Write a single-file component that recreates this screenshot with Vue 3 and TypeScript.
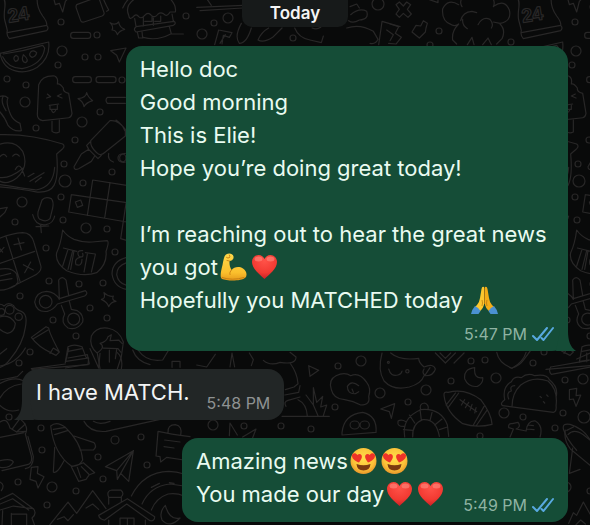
<script setup lang="ts">
type EmojiName = 'muscle' | 'heart' | 'pray' | 'love'
type Part = string | { emoji: EmojiName; label: string }

interface Message {
  id: number
  side: 'out' | 'in'
  time: string
  tail: boolean
  stacked: boolean
  lines: Part[][]
}

const heart: Part = { emoji: 'heart', label: 'red heart' }
const love: Part = { emoji: 'love', label: 'heart eyes' }

const messages: Message[] = [
  {
    id: 1,
    side: 'out',
    time: '5:47 PM',
    tail: true,
    stacked: true,
    lines: [
      ['Hello doc'],
      ['Good morning'],
      ['This is Elie!'],
      ['Hope you’re doing great today!'],
      [],
      ['I’m reaching out to hear the great news you got', { emoji: 'muscle', label: 'flexed biceps' }, heart],
      ['Hopefully you MATCHED today ', { emoji: 'pray', label: 'folded hands' }],
    ],
  },
  { id: 2, side: 'in', time: '5:48 PM', tail: true, stacked: false, lines: [['I have MATCH.']] },
  {
    id: 3,
    side: 'out',
    time: '5:49 PM',
    tail: false,
    stacked: false,
    lines: [
      ['Amazing news', love, love],
      ['You made our day', heart, heart],
    ],
  },
]

// Small rings scattered between the doodles: x, y, radius
const rings: number[][] = [
  [61, 22, 3], [97, 35, 3], [62, 51, 5], [85, 57, 3], [98, 57, 3], [58, 65, 3], [7, 79, 3], [26, 85, 3],
  [122, 80, 3], [25, 102, 5], [100, 112, 3], [82, 122, 5], [36, 128, 3], [75, 140, 3], [64, 164, 3],
  [122, 158, 4], [65, 181, 6], [83, 183, 3], [112, 172, 3], [22, 202, 5], [61, 197, 3], [63, 220, 3],
  [15, 222, 3], [86, 228, 5], [107, 229, 3], [46, 248, 3], [115, 252, 3], [49, 281, 3], [79, 284, 3],
  [103, 283, 3], [20, 296, 3], [90, 308, 3], [107, 318, 3], [53, 320, 3], [76, 336, 3], [30, 352, 3],
  [19, 363, 3], [186, 16, 3], [214, 23, 3], [228, 18, 5], [202, 34, 5], [293, 38, 3], [378, 4, 6],
  [439, 31, 3], [511, 42, 3], [430, 45, 3], [9, 417, 3], [41, 428, 3], [42, 450, 3], [115, 440, 4],
  [141, 437, 3], [98, 457, 3], [147, 465, 3], [103, 479, 3], [52, 487, 5], [76, 491, 3], [18, 482, 3],
  [47, 505, 3], [213, 425, 5], [244, 426, 3], [281, 426, 3], [311, 429, 3], [338, 366, 3], [361, 361, 5],
  [335, 407, 3], [380, 393, 5], [408, 402, 3], [426, 390, 5], [451, 381, 3], [471, 361, 3], [485, 360, 3],
  [496, 378, 5], [504, 413, 5], [565, 380, 3], [583, 379, 5], [563, 413, 3], [584, 417, 6], [480, 436, 3],
]
</script>

<template>
  <main class="chat">
    <svg class="wallpaper" aria-hidden="true">
      <defs>
        <g id="rings-layer">
          <circle v-for="(r, i) in rings" :key="i" :cx="r[0]" :cy="r[1]" :r="r[2]" />
        </g>
        <g id="upper-doodles">
          <g transform="scale(.3334)" stroke-width="3.6">
            <!-- calendar -->
            <path d="M8-10C24 10 8 30 14 60Q20 82 22 92Q18 104 28 116L140 92Q148 84 140 76Q142 66 128 48Q108 20 112-10M22 98L140 76" />
            <text x="26" y="68" font-size="58" font-family="Liberation Sans" font-weight="bold" transform="rotate(-9 26 68)">24</text>
            <path d="M160-8L166 14 178 10 188 36 196 4 208-8M230 14Q226 20 230 28L242 62Q244 68 252 66L306 48Q314 44 312 38L296-8M230 14L290-8M308-8Q316 12 326 30L320 34" />
            <!-- burger cake -->
            <path d="M412-8Q372 14 386 46Q388 60 398 52Q408 38 416 50Q424 58 434 46Q444 34 454 46Q464 56 474 42Q484 34 494 44Q502 50 510 36L526 36Q530 14 506-8M404 56L408 80M430 52V78M434 64H456V50M460 54V76M464 64H482V48M516 42L520 64M408 80Q398 88 408 96L520 76Q530 70 522 64L408 80M412 96L416 114H428L426 96M508 80L514 102H550M430 112Q470 124 512 102M368 24Q380-4 396-8" />
            <!-- stars -->
            <path d="M330 68Q346 78 356 66Q358 82 374 88Q358 92 352 104Q348 90 336 90Q342 80 330 68Z" />
            <path d="M260 278Q258 294 234 296Q250 304 252 320Q258 308 278 302Q264 292 260 278Z" />
            <path d="M332 152L378 144 358 186 350 166Z" />
            <rect x="212" y="97" width="60" height="18" rx="8" />
            <rect x="218" y="230" width="56" height="18" rx="8" /><rect x="288" y="230" width="60" height="18" rx="8" />
            <path d="M376 292H322Q314 300 322 310H376" />
            <!-- watermelon -->
            <path d="M0 160L146 126Q152 172 112 202Q68 228 26 204Q6 190 0 160M8 170Q24 204 66 206Q128 194 134 144L128 136Q70 154 10 162" />
            <path d="M48 166Q36 174 46 184Q58 182 54 170ZM70 164Q62 184 76 188Q90 182 70 164ZM92 156Q84 166 96 172Q108 170 110 158Q100 148 92 156Z" />
            <!-- ice cream -->
            <path d="M116 254Q126 226 164 228Q176 234 172 252Q180 250 190 264Q188 276 206 280L216 340Q214 354 200 354L128 362Q112 358 112 344ZM156 364V394Q166 402 178 396V360M142 282L152 290 140 294M184 282L172 288 186 294M148 316L176 312M150 318V328H172V316M154 328Q160 348 168 328" />
            <!-- banana -->
            <path d="M-4 290Q14 284 24 294Q16 306 32 344Q40 362 60 370L64 392Q40 396 24 376Q12 346-6 330M10 288Q0 304 18 332" />
            <!-- smiling pillow -->
            <path d="M-6 404Q90 400 188 432Q196 438 188 446L170 462Q176 530 162 556Q150 578 112 576Q60 566-6 560M-6 434Q44 416 68 454Q88 500 50 534Q18 558-6 540M0 470Q12 456 20 470M38 468Q48 456 58 468M46 508Q56 490 64 504L74 528" />
            <!-- marker pen -->
            <path d="M330 362L272 422Q270 440 290 458Q300 470 316 456L376 408V388Q354 358 330 362ZM270 426L260 436 266 448 294 476 304 466M266 448L244 462 222 500Q222 512 236 506L274 484 284 468M326 460Q322 480 340 486M348 360Q370 376 374 392" />
            <path d="M376 460Q354 462 360 480Q368 490 376 486" />
          </g>
          <g transform="translate(0 170) scale(.3334)" stroke-width="3.6">
            <path d="M0 44Q90 58 108 60Q160 52 164-8M-4 22Q28 28 70-6M84 20L102 10M90 34L132 8M106 36L124 22" />
            <path d="M126 90Q136 78 154 86Q162 96 158 114L150 146Q138 158 120 148Q112 144 114 126ZM98 134Q106 168 138 164Q160 160 164 138M122 166L124 188M108 170L146 168" />
            <path d="M0 116L22 112 14 128-4 144" />
            <!-- crossword grid -->
            <path d="M278 30L380 46M278 30L262 136M214 74L380 98M214 74L206 126L380 156M330 38L314 144M226 96L242 90 248 106 232 112ZM378 100L362 206 382 212" />
            <!-- cat -->
            <path d="M188 180Q200 198 222 208Q250 218 276 216L322 212Q328 216 318 244Q322 282 290 308Q250 322 200 302Q164 278 170 248Q182 224 188 180ZM190 234L230 244M204 238L188 288M222 242L212 298M218 242L204 298M248 242Q228 240 236 258Q252 266 248 250M240 262Q222 266 228 284Q246 290 246 268M256 248L286 252M262 252L252 306M286 254L274 306" />
            <!-- calculator -->
            <path d="M-4 206Q34 190 68 188Q94 188 102 218L122 286Q128 304 100 318L24 356Q8 362-6 360M18 200Q34 250 60 334M-6 282L104 244M42 224L72 218M54 204L64 240M70 284L100 300M92 276L74 308M-4 232L8 246M-4 250L12 232M-4 298Q36 290 50 312L54 336Q48 350 24 356M0 318L32 310M0 332L36 326" />
            <!-- scissors -->
            <path d="M176 330Q186 316 198 330L206 376M176 330L178 388M178 388Q166 366 140 364Q108 366 104 396Q110 428 142 424Q160 420 172 402L254 378Q266 370 256 362L178 386M184 406L194 432Q180 458 204 474Q232 482 248 456Q252 434 232 422L214 418 208 394" />
            <circle cx="137" cy="395" r="19" /><circle cx="221" cy="447" r="18" />
            <path d="M312 368Q326 382 340 378Q334 390 348 394Q332 396 326 410Q322 396 304 388Q318 386 312 368Z" />
            <path d="M380 262Q336 274 336 312Q342 352 380 358M380 278Q350 288 350 314Q354 340 380 346" />
            <!-- paw -->
            <path d="M-4 404Q4 400 12 408Q24 394 40 406Q46 420 64 424Q84 432 76 472Q70 520 30 568Q16 588-6 594M-4 442Q28 430 46 460Q44 486 22 490Q6 486-4 474" />
            <circle cx="29" cy="419" r="13" /><circle cx="56" cy="440" r="11" /><circle cx="4" cy="426" r="10" />
            <path d="M94 502L138 470 146 474Q148 490 178 546L168 556 156 550Q114 530 94 502ZM100 506L144 480M150 550L160 534 176 544" />
            <path d="M196 576L204 530Q222 520 246 530L258 562 266 564 264 584 96 598M204 544L246 536M198 574L262 564" />
            <path d="M292 550Q266 528 274 498Q288 470 322 474Q358 480 370 516L364 560 352 596M292 550L300 596M292 548Q318 532 300 520Q320 516 324 500L334 494 330 512 356 510 366 520M310 534L354 536 362 546M328 540V576M350 538L346 566" />
            <path d="M398 540Q410 574 450 584" />
          </g>
        </g>
      </defs>

      <g class="ink">
        <use href="#rings-layer" />
        <use href="#upper-doodles" />
        <use href="#rings-layer" x="514" />
        <use href="#upper-doodles" x="514" />

        <!-- behind the date -->
        <g transform="translate(200 0) scale(.3334)" stroke-width="3.6">
          <path d="M-10 22L130 16M0 32L128 24M20-4L34 16M56 90L96 98 88 112 70 106 66 132M56 90L44 134M76 104L60 130M124 70Q102 110 118 130Q140 130 154 84M174 120Q184 96 206 84M174 120Q190 130 218 112L246 84M284 84Q296 114 330 120L364 128 370 108M336 84Q350 90 362 82M440 84Q480 70 520 94L534 118Q526 134 510 130M450 20L470 12 478 24M452 44Q478 22 500 34Q508 58 478 60Q458 72 446 62M536 134L546 64 600 80M560 90L580 104 570 122" />
        </g>
        <!-- top right: cross, bottle, cloud -->
        <g transform="translate(390 0) scale(.3334)" stroke-width="3.6">
          <path d="M18 14L28 6 40 18 50 6 62 14 52 28 64 42 54 52 40 40 28 52 18 42 28 28ZM100 62L112 70 108 84 106 96 88 114 66 96 78 76 92 78ZM0 72L26 80 16 100 34 112 18 132-4 130M104-6L144 8V-6" />
          <path d="M206 14Q174-6 158 26Q154 64 184 74Q196 80 206 72Q184 94 188 120L200 132M212 62Q218 36 246 34L260 38M264 74Q278 48 300 58Q312 72 304 84M312 18Q344-4 358 30Q366 64 330 70L310 66M330 72Q348 90 336 116L320 132M232 134L246 112 252 134M278 134L294 114 304 134M218 58Q216 76 232 86M216-6Q208 8 216 20M308-6Q316 8 310 20" />
        </g>

        <!-- middle band, right of the reply -->
        <g transform="translate(200 345) scale(.3334)" stroke-width="3.6">
          <path d="M-10 60L20 66 46 28M90 66L96 24 104 66M148 24L160 44 154 62M190 46Q210 64 240 52Q288 60 288 36L270 22M270 54Q292 84 294 116L282 126 256 134M254 150L296 142 300 122M258 184Q250 170 264 166L300 156M294 164Q320 176 322 214M246 214H388M318 150L340 180V128L350 172 368 154 362 186 380 180 370 212M340 180L354 212M326 62L356 76 330 94Z" />
          <path d="M408 92Q434 80 452 92Q478 80 500 112Q514 130 506 154Q512 180 482 180Q460 168 434 164Q400 162 394 134Q384 104 408 92ZM476 122Q454 104 442 124Q442 148 466 146L476 140M456 132L460 142" />
          <path d="M546 24Q532 76 552 108Q580 138 628 126Q664 116 672 92Q700 94 706 72Q700 54 672 66Q656 54 656 40Q600 48 572 24M566 72Q572 96 594 90Q604 88 606 78M672 72Q664 84 676 92M690 68L674 92" />
          <circle cx="565" cy="52" r="3" /><circle cx="622" cy="79" r="5" />
          <path d="M706 24L736 54 766 24M720 24L736 40 752 24M762 54L792 24M824 68Q790 72 794 102Q806 128 832 124Q850 116 848 98Q820 102 824 68ZM890 22Q896 54 936 70Q970 50 978 22" />
          <path d="M732 152Q730 138 744 142Q796 128 842 164Q874 206 876 238Q830 250 788 236Q738 202 732 152ZM738 180L766 144M744 188L776 144M820 240L852 184M830 240L862 194M780 164L830 200M784 180L794 164M796 188L806 172M810 196L816 178M824 204L828 188" />
          <path d="M914 164Q898 176 908 182L1060 202Q1070 200 1068 182Q1074 134 1044 108Q998 92 962 120Q936 144 936 184M914 164Q906 126 934 110Q942 92 964 98Q982 82 1004 92Q1040 86 1048 104Q1076 126 1068 156M926 162Q918 142 934 138Q928 122 944 122M1020 154L1024 158M1040 150L1044 154M1030 170L1034 174" />
          <path d="M1052 66L1166 46M1052 66Q1044 78 1054 88L1170 66M1108 134L1130 130 1128 152 1142 150 1128 184 1120 162 1108 164ZM1160 24V50M1130 42L1170 24" />
          <path d="M426 262Q432 208 488 202Q532 212 528 262L426 270ZM450 240A14 12 0 1 0 478 240A14 12 0 1 0 450 240M480 240A14 12 0 1 0 508 240A14 12 0 1 0 480 240" />
          <path d="M614 276Q604 218 662 194Q722 188 742 240L746 274M638 276Q636 236 668 224Q708 220 718 274M662 194Q656 176 674 174Q688 180 684 194M614 244Q590 246 594 228Q604 222 618 230M628 210L644 234M660 194L664 226M696 202L690 226M726 222L704 240M610 254L638 256M718 254L742 246M542 192L584 176 574 220 568 200Z" />
          <path d="M930 276L940 252 926 248Q924 234 936 236L954 232Q964 246 948 252L978 258Q982 226 1006 228Q1030 242 1020 276M984 240L1000 242M980 252L1002 254M1090 252Q1086 234 1110 238Q1150 250 1170 284M1090 252Q1100 284 1130 316M1100 256L1120 246M88 272L90 234 112 270M128 276L168 252 158 278" />
        </g>

        <!-- lower left corner -->
        <g transform="translate(0 350) scale(.3334)" stroke-width="3.6">
          <path d="M0 48Q50 40 76-6M20-4L0 12M94 56L196 42M196 38L206-4M196 54L268 42 262 14 204 24M270-4L296 54 300 10M352 8Q370 24 364 56M414 0Q440 38 488 30L506 0M516 52V34H540V52" />
          <path d="M0 90L52 80 68 64M0 100Q44 78 70 92M0 144Q20 108 64 102M0 166Q24 190 56 180M0 216Q20 200 30 234L50 246 76 244M62 208Q88 230 76 252L94 318Q98 340 82 344L6 362M0 262L72 248M84 260L100 320Q100 352 76 356M0 332Q34 324 40 336Q30 356 0 352M36 238L58 208M50 246L76 222" />
          <path d="M152 228Q170 212 196 232Q244 278 248 330Q236 352 214 348Q162 312 152 228ZM160 238L196 232M164 254L202 242M222 258L282 278Q292 290 280 300L240 300M164 292L160 366Q170 374 192 332M214 350L236 344 250 338 284 368 268 374 258 388 236 394 226 374ZM232 352L242 382M244 350L266 372" />
          <path d="M400 302L316 350 350 362 352 388 362 370 386 394ZM400 302L350 362M400 302L362 370" />
          <path d="M94 352L114 350 112 370 132 380 114 414 108 394 90 388ZM474 244Q510 252 570 260M474 244L468 318 480 320 482 336 500 322 552 330M504 248Q502 224 526 224Q548 228 542 256M494 270L540 276M492 290L522 294" />
          <path d="M252 214Q270 248 318 244L480 208M280 214Q300 226 330 214" />
          <path d="M0 448L38 430 100 476M0 462L38 446 86 480M0 480L40 468 100 476Q112 490 96 504L104 526M8 482L6 526M34 490V526M34 492H80V526M0 396Q16 404 4 422M148 526L204 456 230 490 278 422 318 476M172 508L192 500 204 512 220 494M258 474L278 462 296 478" />
          <path d="M296 496Q298 508 314 510L380 462 450 512Q464 514 464 500L382 446ZM326 462V442Q318 422 336 420H362Q374 430 364 440V456M328 442H364M326 510V528M436 510V528M360 528V504H402V528M382 504V528" />
          <path d="M394 438Q430 366 506 364Q530 364 552 372M426 462Q450 408 510 402L552 408M454 480Q468 444 504 432Q530 428 552 438M454 412L478 400M508 398L522 400M496 466Q476 486 486 510Q510 536 540 504Q508 512 496 466Z" />
        </g>

        <!-- lower right edge -->
        <g transform="translate(440 430) scale(.3334)" stroke-width="3.6">
          <path d="M376 0Q370 30 392 58L450 106M384 14Q400-6 430 14L450 30M398 54L388 130 420 118M386 280L400 248 410 256 430 216 450 252M408 284L422 270 436 282" />
        </g>
      </g>
    </svg>

    <header class="day"><time>Today</time></header>

    <section class="thread" aria-label="Messages">
      <article
        v-for="m in messages"
        :key="m.id"
        class="bubble"
        :class="[m.side, { stacked: m.stacked }]"
      >
        <div class="body">
          <p v-for="(line, i) in m.lines" :key="i" class="line">
            <template v-for="(part, j) in line" :key="j">
              <template v-if="typeof part === 'string'">{{ part }}</template>
              <svg v-else class="emoji" viewBox="0 0 27 28" role="img" :aria-label="part.label">
                <template v-if="part.emoji === 'heart'">
                  <path d="M13.5 26C9 21.5 1 16 1 9C1 5 4 2 7.5 2C10.5 2 12.5 4 13.5 6C14.5 4 16.5 2 19.5 2C23 2 26 5 26 9C26 16 18 21.5 13.5 26Z" fill="url(#heart-fill)" />
                  <ellipse cx="7.5" cy="6" rx="4" ry="2.5" fill="#ff8c80" opacity=".6" />
                  <ellipse cx="19.5" cy="6" rx="4" ry="2.5" fill="#ff8c80" opacity=".6" />
                </template>
                <template v-else-if="part.emoji === 'love'">
                  <circle cx="13.5" cy="14" r="13" fill="url(#face-fill)" />
                  <path d="M6.5 17Q13.5 19.5 20.5 17Q20 23.5 13.5 23.5Q7 23.5 6.5 17Z" fill="#7b3a10" />
                  <path d="M9 15.500C5 14 1.800 11.500 2 8.500C2.300 5.500 6 5.500 7.300 8C9.500 5.800 12.500 7.500 11.800 10.500C11.400 12.300 10.200 14 9 15.500Z" fill="#ee3328" />
                  <path d="M18 15.500C22 14 25.200 11.500 25 8.500C24.700 5.500 21 5.500 19.700 8C17.500 5.800 14.500 7.500 15.200 10.500C15.600 12.300 16.800 14 18 15.500Z" fill="#ee3328" />
                </template>
                <template v-else-if="part.emoji === 'muscle'">
                  <path d="M6 1.500C9-.500 13 .500 13.500 3.500C14 6.500 11 8 9.500 8C9.300 11 9.800 14 11.500 17C14 14 19 13 23 15.500C26.500 17.700 27.500 22 25.500 24.500C21 28.500 7 28 2 26C-.500 24.500 1 18 2.500 12C3.500 7 4 3 6 1.500Z" fill="url(#skin-fill)" />
                  <path d="M11.500 17C10 18.500 9.500 20 10 21.500M6.500 4.500Q8 6 9.500 4.500M9.500 8L7 7.500M9.500 4.500Q10.500 3.500 9.500 2M2 24.500Q12 28 24 24.500" fill="none" stroke="#c47c12" stroke-width=".9" stroke-linecap="round" />
                </template>
                <template v-else>
                  <path d="M13 1Q11 0 10.500 3L9 12Q8.500 16 6 19L4 21L8 26Q13 22 13.300 17Z" fill="#fcc72e" />
                  <path d="M14 1Q16 0 16.500 3L18 12Q18.500 16 21 19L23 21L19 26Q14 22 13.700 17Z" fill="#f4ad17" />
                  <path d="M13.500 1.500V18M11 14Q12 17 11 20M16 14Q15 17 16 20" stroke="#b97a10" stroke-width=".8" fill="none" />
                  <path d="M4 20Q7.500 21.500 9.500 25L7.500 28H0Q.5 24 4 20Z" fill="#4b91d1" />
                  <path d="M23 20Q19.500 21.500 17.500 25L19.500 28H27Q26.500 24 23 20Z" fill="#4b91d1" />
                </template>
              </svg>
            </template>
          </p>
        </div>
        <footer class="meta">
          <time>{{ m.time }}</time>
          <svg v-if="m.side === 'out'" class="ticks" viewBox="0 0 22 16" role="img" aria-label="Read">
            <path d="M1 10L5 14L15 2M9.500 12L11.500 14L21 2" />
          </svg>
        </footer>
        <svg v-if="m.tail" class="tail" viewBox="0 0 24 20" aria-hidden="true">
          <path d="M8 0H16C16 9 18 16 24 20H4Z" />
        </svg>
      </article>
    </section>

    <svg class="paints" aria-hidden="true">
      <defs>
        <radialGradient id="heart-fill" cx=".5" cy=".25" r=".75">
          <stop offset="0" stop-color="#ff5248" /><stop offset=".65" stop-color="#f23a32" /><stop offset="1" stop-color="#c91f25" />
        </radialGradient>
        <radialGradient id="face-fill" cx=".5" cy=".4" r=".6">
          <stop offset="0" stop-color="#ffdf4a" /><stop offset=".7" stop-color="#fbc238" /><stop offset="1" stop-color="#e8962a" />
        </radialGradient>
        <linearGradient id="skin-fill" x1="0" y1="0" x2="0" y2="1">
          <stop offset="0" stop-color="#ffd84a" /><stop offset=".7" stop-color="#fbc02d" /><stop offset="1" stop-color="#e59a1a" />
        </linearGradient>
      </defs>
    </svg>
  </main>
</template>

<style>
body {
  background: #090a0a;
}
</style>

<style scoped>
.chat {
  position: relative;
  box-sizing: border-box;
  min-height: 100vh;
  overflow: hidden;
  background: #090a0a;
  color: #e9fbf1;
  font-family: Inter, "Liberation Sans", sans-serif;
}

.wallpaper {
  position: absolute;
  inset: 0;
  width: 100%;
  height: 100%;
}

.ink {
  fill: none;
  stroke: #282727;
  stroke-width: 1.2;
  stroke-linecap: round;
  stroke-linejoin: round;
}

.day {
  position: relative;
  display: flex;
  justify-content: center;
}

.day time {
  padding: 0 28px;
  border-radius: 0 0 10px 10px;
  background: #171a1a;
  color: #f4f4f4;
  font-size: 17px;
  font-weight: 600;
  line-height: 27px;
}

.thread {
  position: relative;
  display: flex;
  flex-direction: column;
  gap: 18px;
  padding: 19px 22px 3px;
}

.bubble {
  position: relative;
  display: flex;
  align-items: flex-end;
  gap: 17px;
  box-sizing: border-box;
  max-width: 81%;
  padding: 7px 14px;
  border-radius: 16px;
}

.out {
  align-self: flex-end;
  background: #154d37;
}

.in {
  align-self: flex-start;
  background: #222626;
  color: #f3f4f4;
}

.stacked {
  flex-direction: column;
  gap: 3px;
}

.body {
  padding-bottom: 4px;
}

.stacked .body {
  align-self: stretch;
}

.line {
  min-height: 33px;
  margin: 0;
  font-size: 22px;
  line-height: 33px;
}

.emoji {
  width: 27px;
  height: 28px;
  margin: 0 2px;
  vertical-align: -6px;
}

.meta {
  display: flex;
  align-items: center;
  gap: 5px;
  color: #8fb3a3;
  font-size: 16px;
  line-height: 20px;
  white-space: nowrap;
}

.in .meta {
  color: #8e9292;
}

.ticks {
  width: 22px;
  height: 16px;
  fill: none;
  stroke: #58a9e0;
  stroke-width: 2;
  stroke-linecap: round;
  stroke-linejoin: round;
}

.tail {
  position: absolute;
  right: -8px;
  bottom: 0;
  width: 24px;
  height: 20px;
  fill: #154d37;
}

.in .tail {
  right: auto;
  left: -8px;
  fill: #222626;
  transform: scaleX(-1);
}

.paints {
  position: absolute;
  width: 0;
  height: 0;
}
</style>
